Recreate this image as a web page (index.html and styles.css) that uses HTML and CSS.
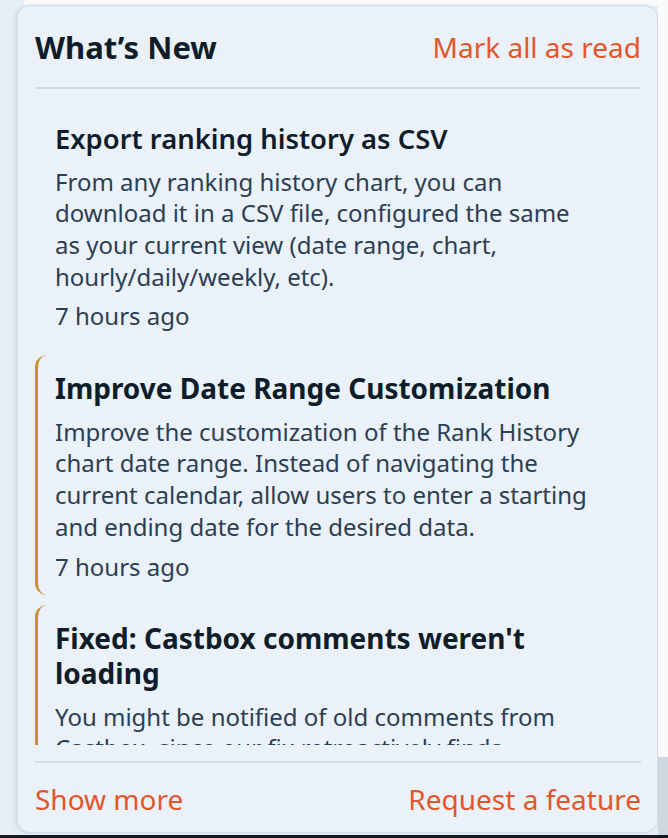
FILE: index.html
```html
<!DOCTYPE html>
<html lang="en">
<head>
<meta charset="utf-8">
<title>What's New</title>
<link rel="stylesheet" href="styles.css">
</head>
<body>
<div class="page">
  <section class="card">
    <header class="head">
      <h2 class="title">What’s New</h2>
      <a class="link" href="#">Mark all as read</a>
    </header>
    <div class="list">
      <article class="item">
        <h3 class="item-title">Export ranking history as CSV</h3>
        <p class="item-body">From any ranking history chart, you can download it in a CSV file, configured the same as your current view (date range, chart, hourly/daily/weekly, etc).</p>
        <div class="item-time">7 hours ago</div>
      </article>
      <article class="item unread">
        <h3 class="item-title">Improve Date Range Customization</h3>
        <p class="item-body">Improve the customization of the Rank History chart date range. Instead of navigating the current calendar, allow users to enter a starting and ending date for the desired data.</p>
        <div class="item-time">7 hours ago</div>
      </article>
      <article class="item unread">
        <h3 class="item-title">Fixed: Castbox comments weren't loading</h3>
        <p class="item-body">You might be notified of old comments from Castbox, since our fix retroactively finds comments that were missed.</p>
        <div class="item-time">7 hours ago</div>
      </article>
    </div>
    <footer class="foot">
      <a class="link" href="#">Show more</a>
      <a class="link" href="#">Request a feature</a>
    </footer>
  </section>
</div>
</body>
</html>
```

FILE: styles.css
```css
html, body {
  margin: 0;
  padding: 0;
}
body {
  width: 668px;
  height: 838px;
  overflow: hidden;
  font-family: "Noto Sans", "Open Sans", sans-serif;
  background:
    linear-gradient(#18191b, #18191b) 0 835px / 668px 3px no-repeat,
    linear-gradient(#f8fafc, #f8fafc) 24px 0 / 644px 6px no-repeat,
    linear-gradient(#f8fafc, #f8fafc) 658px 0 / 10px 757px no-repeat,
    linear-gradient(#cdd8e0, #cdd8e0) 658px 757px / 10px 78px no-repeat,
    #e6edf3;
}
.page {
  padding: 5px 10px 0 17px;
}
.card {
  box-sizing: border-box;
  width: 641px;
  height: 828px;
  background: #eaf1f8;
  border: 1px solid #d3dde5;
  border-radius: 13px;
  box-shadow: -2px 0 3px rgba(150, 170, 190, 0.25);
  padding: 0 16px 0 17px;
  display: flex;
  flex-direction: column;
}
.head {
  height: 81px;
  flex: none;
  display: flex;
  align-items: center;
  justify-content: space-between;
  border-bottom: 2px solid #d0dce4;
}
.title {
  margin: 0;
  font-size: 31px;
  font-weight: 700;
  color: #0f1d2b;
}
.link {
  color: #e2562b;
  text-decoration: none;
  font-size: 28px;
}
.list {
  flex: none;
  height: 656px;
  overflow: hidden;
  padding-top: 16px;
  box-sizing: border-box;
  display: flex;
  flex-direction: column;
  gap: 10px;
}
.item {
  flex: none;
  border-left: 3px solid transparent;
  border-radius: 12px;
  padding: 16px 48px 13px 17px;
}
.item.unread {
  border-left-color: #c9922f;
}
.item-title {
  margin: 0;
  font-size: 27.4px;
  font-weight: 600;
  line-height: 35px;
  color: #0f1d2b;
}
.unread .item-title {
  font-size: 28px;
  font-weight: 700;
}
.item-body {
  margin: 9.5px 0 0;
  font-size: 24px;
  line-height: 31.67px;
  color: #2c3e52;
}
.item-time {
  margin-top: 8.3px;
  font-size: 24px;
  line-height: 31.67px;
  color: #2c3e52;
}
.foot {
  flex: none;
  margin-top: 16px;
  height: 70px;
  padding-top: 3px;
  box-sizing: border-box;
  border-top: 2px solid #d0dce4;
  display: flex;
  align-items: center;
  justify-content: space-between;
}
```
